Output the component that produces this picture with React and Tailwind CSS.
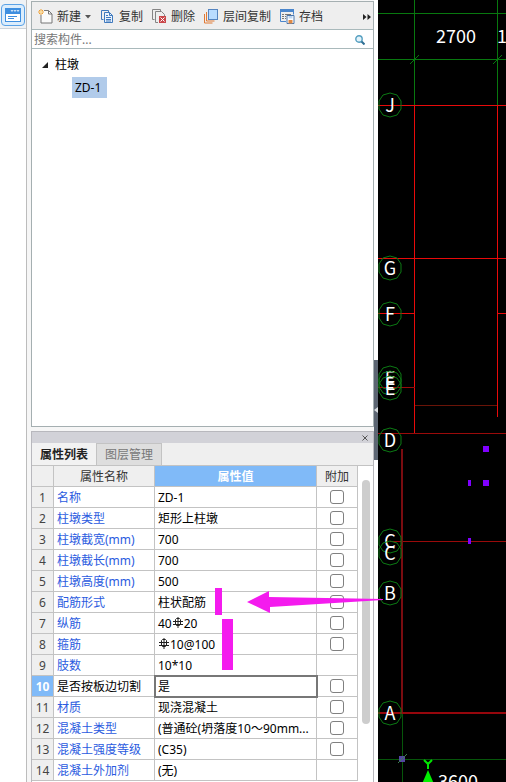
import React from "react";

const rows = [
  { name: "名称", value: "ZD-1", check: true },
  { name: "柱墩类型", value: "矩形上柱墩", check: true },
  { name: "柱墩截宽(mm)", value: "700", check: true },
  { name: "柱墩截长(mm)", value: "700", check: true },
  { name: "柱墩高度(mm)", value: "500", check: true },
  { name: "配筋形式", value: "柱状配筋", check: true },
  { name: "纵筋", value: ["40", "20"], check: true },
  { name: "箍筋", value: ["", "10@100"], check: true },
  { name: "肢数", value: "10*10", check: false },
  { name: "是否按板边切割", value: "是", check: true, active: true },
  { name: "材质", value: "现浇混凝土", check: true },
  { name: "混凝土类型", value: "(普通砼(坍落度10～90mm...", check: true },
  { name: "混凝土强度等级", value: "(C35)", check: true },
  { name: "混凝土外加剂", value: "(无)", check: false },
];

function RebarMark() {
  return (
    <svg className="mx-px inline-block h-3 w-[10px] align-[-1px]" viewBox="0 0 10 12" fill="none" stroke="#222" aria-hidden="true">
      <path d="M3.500 1.500h3l1 1v5l-1 1h-3l-1-1v-5zM5 0v11M0 4.500h10M0 7.500h10" />
    </svg>
  );
}

function NewIcon() {
  return (
    <svg className="size-[15px]" viewBox="0 0 15 15" fill="none" aria-hidden="true">
      <path d="M6 1.500h4.500l3.500 3.500v9H3V6" fill="#fafafa" stroke="#777" />
      <path d="M10.500 1.500v3.500H14" stroke="#777" />
      <path d="M3 0v6M0 3h6M1 1l4 4M5 1 1 5" stroke="#f0a030" />
      <circle cx="3" cy="3" r="1" fill="#fff3c0" />
    </svg>
  );
}

function CopyIcon() {
  return (
    <svg className="size-[15px]" viewBox="0 0 15 15" fill="none" stroke="#3f79bd" aria-hidden="true">
      <path d="M3.500 10.500h-2v-9h7v2" />
      <path d="M4.500 3.500h5l3 3v7h-8z" fill="#eaf3fd" />
      <path d="M9.500 3.500v3h3M6 6.500h2M6 8.500h5M6 10.500h5M6 12h5" />
    </svg>
  );
}

function DeleteIcon() {
  return (
    <svg className="size-[15px]" viewBox="0 0 15 15" fill="none" aria-hidden="true">
      <path d="M2.500 10.500h-2v-10h8v2M6 13.500H3.500v-11h6l3 3v2" stroke="#858585" />
      <rect x="7" y="7" width="7" height="7" fill="#c9474a" />
      <path d="m8.500 8.500 4 4M12.500 8.500l-4 4" stroke="#fff" />
    </svg>
  );
}

function LayerIcon() {
  return (
    <svg className="size-[15px]" viewBox="0 0 15 15" fill="none" aria-hidden="true">
      <path d="M.500 5v9h8M2.500 3v9h8" stroke="#e07a35" />
      <rect x="4.500" y=".500" width="9" height="10" fill="#b9dcff" stroke="#5585c0" />
    </svg>
  );
}

function ArchiveIcon() {
  return (
    <svg className="size-[15px]" viewBox="0 0 15 15" fill="none" aria-hidden="true">
      <path d="M.500.500h13v5M.500.500v12H6" stroke="#4a86cc" />
      <path d="M0 0h14v3H0z" fill="#4a86cc" />
      <path d="M2 5.500h2M5 5.500h6M2 7.500h2M5 7.500h1M2 9.500h2M5 9.500h1" stroke="#777" />
      <path d="M7 6.500h7v8H7z" fill="#fff" stroke="#4a76ad" />
      <path d="M8.500 7h4v2.500h-4z" fill="#bcd6f2" />
      <path d="M8.500 11h4v3.500h-4z" fill="#e08a45" />
    </svg>
  );
}

function ToolButton({ icon, label, menu }) {
  return (
    <button type="button" className="flex shrink-0 items-center whitespace-nowrap">
      {icon}
      <span className="ml-1">{label}</span>
      {menu && (
        <svg className="ml-1 h-1 w-1.5" viewBox="0 0 6 4" aria-hidden="true">
          <path d="M0 0h6L3 3.500z" fill="#555" />
        </svg>
      )}
    </button>
  );
}

function Rail() {
  return (
    <nav className="w-[27px] shrink-0 border-r border-[#bcbcbc] bg-white">
      <div className="flex h-[29px] items-end justify-center border-b border-[#ccd3da] bg-[#eff2f5] pb-0.5">
        <button type="button" aria-label="构件列表" className="flex h-[22px] w-6 items-center justify-center rounded-[4px] border border-[#5ba2e6] bg-[#dcedfc]">
          <svg className="h-[14px] w-4" viewBox="0 0 16 14" fill="none" aria-hidden="true">
            <rect x=".500" y=".500" width="15" height="13" fill="#fff" stroke="#3f8fe0" />
            <path d="M0 0h16v6H0z" fill="#3f8fe0" />
            <path d="M6 2.500h2l-1 1zM9 2.500h2l-1 1zM12 2.500h2l-1 1z" fill="#fff" stroke="#fff" strokeWidth=".5" />
            <path d="M3 8.500h9M3 10.500h6" stroke="#3f8fe0" />
          </svg>
        </button>
      </div>
    </nav>
  );
}

function ComponentList() {
  return (
    <section className="border border-[#a5afb1]">
      <div className="flex h-7 items-center gap-[9px] border-b border-[#a9b9bb] bg-[#eeeeee] pl-1.5 pr-0.5 pt-0.5 text-[#333]">
        <ToolButton icon={<NewIcon />} label="新建" menu />
        <ToolButton icon={<CopyIcon />} label="复制" />
        <ToolButton icon={<DeleteIcon />} label="删除" />
        <ToolButton icon={<LayerIcon />} label="层间复制" />
        <ToolButton icon={<ArchiveIcon />} label="存档" />
        <button type="button" aria-label="更多" className="ml-auto">
          <svg className="h-1.5 w-2" viewBox="0 0 8 6" fill="#222" aria-hidden="true">
            <path d="M0 0l3.500 3L0 6zM4.500 0 8 3 4.500 6z" />
          </svg>
        </button>
      </div>
      <div className="flex h-[19px] items-center border-b border-[#a9b9bb] bg-white pl-0.5 pr-2 pt-0.5">
        <input aria-label="搜索构件" placeholder="搜索构件..." className="min-w-0 flex-1 bg-transparent outline-none placeholder:text-[#777]" />
        <svg className="size-[10px]" viewBox="0 0 10 10" fill="none" aria-hidden="true">
          <circle cx="4" cy="4" r="3.200" fill="#e3f3fb" stroke="#559fc0" strokeWidth="1.400" />
          <path d="m6.500 6.500 3 3" stroke="#2f6f94" strokeWidth="2" />
        </svg>
      </div>
      <ul className="h-[377px] bg-white pt-1 text-black">
        <li>
          <div className="flex h-6 items-center pl-2.5">
            <svg className="size-1.5" viewBox="0 0 6 6" aria-hidden="true">
              <path d="M6 0v6H0z" fill="#222" />
            </svg>
            <span className="ml-[7px]">柱墩</span>
          </div>
          <ul className="pl-10">
            <li className="h-[21px] w-[35px] bg-[#b1cbea] pl-[3px] leading-[21px]">ZD-1</li>
          </ul>
        </li>
      </ul>
    </section>
  );
}

function PropertyTable() {
  return (
    <table className="w-[326px] shrink-0 table-fixed border-separate border-spacing-0 self-start whitespace-nowrap">
      <colgroup>
        <col className="w-[22px]" />
        <col className="w-[101px]" />
        <col className="w-[162px]" />
        <col className="w-[41px]" />
      </colgroup>
      <thead>
        <tr className="h-[21px] text-[#333]">
          <th className="border-b border-r border-[#c3c3c3] bg-[#efefef] p-0" />
          <th className="border-b border-r border-[#c3c3c3] bg-[#efefef] p-0 pt-0.5 font-normal leading-[18px]">属性名称</th>
          <th className="border-b border-r border-[#c3c3c3] bg-[#80baf8] p-0 pt-0.5 font-bold leading-[18px] text-white">属性值</th>
          <th className="border-b border-r border-[#c3c3c3] bg-[#efefef] p-0 pt-0.5 font-normal leading-[18px]">附加</th>
        </tr>
      </thead>
      <tbody>
        {rows.map((row, i) => (
          <tr key={row.name} className="h-[21px]">
            <th
              scope="row"
              className={
                row.active
                  ? "border-b border-r border-[#c3c3c3] bg-[#80baf8] p-0 pt-0.5 font-bold leading-[18px] text-white"
                  : "border-b border-r border-[#c3c3c3] bg-[#efefef] p-0 pt-0.5 font-normal leading-[18px] text-[#444]"
              }
            >
              {i + 1}
            </th>
            <td
              className={
                row.active
                  ? "border-b border-r border-[#c3c3c3] p-0 pl-[3px] pt-0.5 leading-[18px] text-black"
                  : "border-b border-r border-[#c3c3c3] p-0 pl-[3px] pt-0.5 leading-[18px] text-[#2b5be0]"
              }
            >
              {row.name}
            </td>
            <td
              className={
                row.active
                  ? "border-b border-r border-[#777] p-0 pl-[3px] pt-0.5 leading-[18px] text-black outline-2 -outline-offset-1 outline-[#777]"
                  : "border-b border-r border-[#c3c3c3] p-0 pl-[3px] pt-0.5 leading-[18px] text-black"
              }
            >
              {Array.isArray(row.value) ? (
                <>
                  {row.value[0]}
                  <RebarMark />
                  {row.value[1]}
                </>
              ) : (
                row.value
              )}
            </td>
            <td className="border-b border-r border-[#c3c3c3] p-0">
              {row.check && (
                <input
                  type="checkbox"
                  aria-label={row.name}
                  className="mx-auto block size-[14px] appearance-none rounded-[3px] border border-[#808080] bg-white checked:bg-[#80baf8]"
                />
              )}
            </td>
          </tr>
        ))}
      </tbody>
    </table>
  );
}

function PropertyPanel() {
  return (
    <section className="mt-1 flex min-h-0 flex-1 flex-col border-x border-t border-[#b8b8bd]">
      <div className="flex h-[11px] shrink-0 items-center justify-end bg-[#d2d2d8] pr-[5px]">
        <button type="button" aria-label="关闭">
          <svg className="size-1.5" viewBox="0 0 6 6" stroke="#555" aria-hidden="true">
            <path d="m.500.500 5 5M5.500.500l-5 5" />
          </svg>
        </button>
      </div>
      <div role="tablist" className="flex h-[23px] shrink-0 border-b border-[#c3c3c3] bg-[#efefef]">
        <button type="button" role="tab" aria-selected="true" className="w-[65px] border-r border-[#c3c3c3] bg-[#f2f2f2] pt-0.5 font-bold text-[#222]">
          属性列表
        </button>
        <button type="button" role="tab" aria-selected="false" className="w-[65px] border-r border-t border-[#c3c3c3] bg-[#dedede] pt-px text-[#777]">
          图层管理
        </button>
      </div>
      <div className="flex min-h-0 flex-1 overflow-hidden bg-white">
        <PropertyTable />
        <div className="flex-1 pl-1 pt-[14px]">
          <div className="h-[244px] w-2 rounded-full bg-[#cdcdcd]" />
        </div>
      </div>
    </section>
  );
}

const axes = [
  ["J", 105],
  ["G", 268],
  ["F", 314],
  ["E", 378],
  ["E", 383],
  ["E", 388],
  ["D", 440],
  ["C", 541],
  ["C", 553],
  ["B", 593],
  ["A", 713],
];

function Drawing() {
  return (
    <main className="min-w-0 flex-1 overflow-hidden bg-black">
      <svg className="h-full w-full font-['Noto_Sans_CJK_SC',sans-serif] text-[18px]" fill="none">
        <g stroke="#08780f">
          <path d="M0 13.500h2000M0 59.500h2000M36.500 0v105M119.500 0v105" />
          <path d="m32 64 9-9M115 64l9-9" />
          <path d="M24.500 713v400M0 759.500h2000" stroke="#06560a" />
        </g>
        <g stroke="#e80a0a">
          <path d="M0 105.500h2000M0 258.500h2000M0 313.500h37M119 313.500h2000" />
          <path d="M36.500 105v329M119.500 105v312" />
        </g>
        <g stroke="#9a0a0a">
          <path d="M0 387.500h37M0 433.500h2000M12 541.500h2000" />
          <path d="M37 405.500h82" stroke="#6a1408" />
          <path d="M24 449v264" strokeWidth="2" stroke="#7a0c10" />
          <path d="M0 713h2000" strokeWidth="2" stroke="#96060c" />
        </g>
        {axes.map(([label, y]) => (
          <g key={label + y} transform={`translate(12 ${y})`}>
            <path d="M0-12 7-10 11-4V4L7 10 0 12-7 10-11 4V-4L-7-10z" stroke="#0c7a14" />
            <text y="7" textAnchor="middle" fill="#fff">{label}</text>
          </g>
        ))}
        <g fill="#8000ff">
          <path d="M105 446h6v6h-6zM105 480h6v6h-6zM90 480h3v6h-3zM90 538h3v6h-3z" />
        </g>
        <g fill="#fff">
          <text x="58" y="43">2700</text>
          <text x="119" y="43">1800</text>
          <text x="60" y="788">3600</text>
        </g>
        <path d="M21 756h6v6h-6z" fill="#5247a0" />
        <path d="m20 763 9-9" stroke="#3d7d50" />
        <path d="m46 760 4 4 4-4M50 764v5" stroke="#00e500" strokeWidth="2" />
        <path d="m50 770 6 14H44z" fill="#00f000" />
      </svg>
    </main>
  );
}

function Markup() {
  return (
    <svg className="pointer-events-none absolute left-0 top-0 h-full w-full" fill="#f41bee" aria-hidden="true">
      <path d="M215 588h7v27h-7zM222 619h11v51h-11z" />
      <path d="m247 602 22-11v6l114 2v1l-113 7v6z" />
    </svg>
  );
}

export default function App() {
  return (
    <div className="relative flex h-screen overflow-hidden bg-[#f6f6f6] font-['Noto_Sans','Noto_Sans_CJK_SC',sans-serif] text-[12px] leading-4">
      <Rail />
      <div className="ml-1 flex w-[343px] shrink-0 flex-col pt-px">
        <ComponentList />
        <PropertyPanel />
      </div>
      <div className="w-1 shrink-0 bg-white pt-[360px]">
        <button type="button" aria-label="收起" className="flex h-[100px] w-full items-center bg-[#5d6673]">
          <svg className="h-1.5 w-1" viewBox="0 0 4 6" aria-hidden="true">
            <path d="M4 0v6L0 3z" fill="#d8dce0" />
          </svg>
        </button>
      </div>
      <Drawing />
      <Markup />
    </div>
  );
}
